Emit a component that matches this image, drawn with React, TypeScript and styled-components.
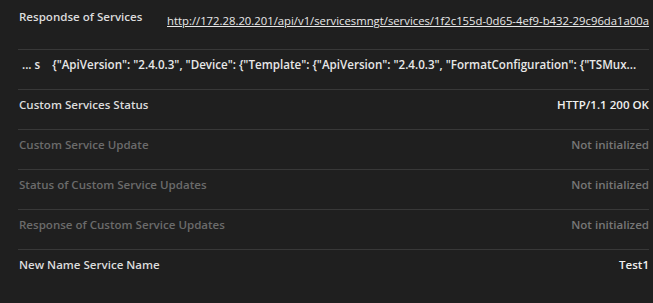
import React from "react"
import styled, { createGlobalStyle } from "styled-components"

const GlobalStyle = createGlobalStyle`
  html, body {
    margin: 0;
    padding: 0;
    background: #1f1f1f;
  }
  body {
    font-family: "Open Sans", "Noto Sans", sans-serif;
  }
`

const Panel = styled.div`
  width: 653px;
  height: 303px;
  background: #1f1f1f;
  padding: 0 4px 0 18px;
  box-sizing: border-box;
  overflow: hidden;
`

const Row = styled.div<{ $tall?: boolean }>`
  display: flex;
  align-items: flex-start;
  justify-content: space-between;
  gap: 12px;
  height: ${(p) => (p.$tall ? 50 : 40)}px;
  box-sizing: border-box;
  padding-top: ${(p) => (p.$tall ? 8 : 6)}px;
  border-bottom: 1px solid #383838;

  &:last-child {
    border-bottom: none;
  }
`

const Label = styled.span<{ $dim?: boolean }>`
  font-size: 11.55px;
  font-weight: 600;
  line-height: 18px;
  padding-left: 1px;
  white-space: nowrap;
  color: ${(p) => (p.$dim ? "#6b6b6b" : "#dcdcdc")};
`

const Value = styled.span<{ $dim?: boolean }>`
  font-size: 11.55px;
  font-weight: 600;
  line-height: 18px;
  white-space: nowrap;
  color: ${(p) => (p.$dim ? "#777777" : "#f0f0f0")};
`

const Link = styled.a`
  font-size: 11.3px;
  font-weight: 400;
  line-height: 18px;
  margin-top: 4px;
  color: #e8e8e8;
  text-decoration: underline;
  white-space: nowrap;
`

const JsonLine = styled.div`
  display: flex;
  gap: 12px;
  min-width: 0;
  padding-left: 4px;
  font-size: 11.6px;
  font-weight: 600;
  line-height: 18px;
  color: #e8e8e8;
  white-space: nowrap;
`

const Json = styled.span`
  overflow: hidden;
`

const rows = [
  { label: "Custom Services Status", value: "HTTP/1.1 200 OK", dimLabel: false, dimValue: false },
  { label: "Custom Service Update", value: "Not initialized", dimLabel: true, dimValue: true },
  { label: "Status of Custom Service Updates", value: "Not initialized", dimLabel: true, dimValue: true },
  { label: "Response of Custom Service Updates", value: "Not initialized", dimLabel: true, dimValue: true },
  { label: "New Name Service Name", value: "Test1", dimLabel: false, dimValue: false },
]

export default function App() {
  return (
    <>
      <GlobalStyle />
      <Panel>
        <Row $tall>
          <Label>Respondse of Services</Label>
          <Link href="#">
            http://172.28.20.201/api/v1/servicesmngt/services/1f2c155d-0d65-4ef9-b432-29c96da1a00a
          </Link>
        </Row>
        <Row>
          <JsonLine>
            <span>... s</span>
            <Json>
              {'{"ApiVersion": "2.4.0.3", "Device": {"Template": {"ApiVersion": "2.4.0.3", "FormatConfiguration": {"TSMux...'}
            </Json>
          </JsonLine>
        </Row>
        {rows.map((r) => (
          <Row key={r.label}>
            <Label $dim={r.dimLabel}>{r.label}</Label>
            <Value $dim={r.dimValue}>{r.value}</Value>
          </Row>
        ))}
      </Panel>
    </>
  )
}
